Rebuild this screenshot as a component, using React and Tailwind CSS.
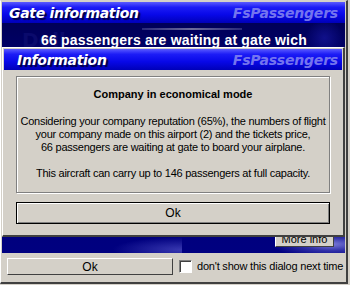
import React from 'react';

const TitleBar = ({ title, className = '' }) => (
  <div
    className={`flex items-center justify-between h-[21px] px-[7px] bg-[linear-gradient(180deg,#5a5aff_0%,#1c1cf6_25%,#0808e8_60%,#0000b8_100%)] ${className}`}
  >
    <span className="font-['DejaVu_Sans',sans-serif] font-bold italic text-[14px] leading-none tracking-[-0.3px] text-white [text-shadow:2px_2px_1px_#000040]">
      {title}
    </span>
    <span className="font-['DejaVu_Sans',sans-serif] font-bold italic text-[14px] leading-none tracking-[-0.2px] text-[#8080f0] opacity-90">
      FsPassengers
    </span>
  </div>
);

const App = () => {
  return (
    <div className="relative w-[350px] h-[285px] overflow-hidden bg-[#d4d0c8] font-['Liberation_Sans',Arial,sans-serif]">
      {/* Outer window: Gate information */}
      <div className="flex flex-col w-[348px] h-[284px] border-l border-t border-l-white border-t-[#d4d0c8] border-r-2 border-b-2 border-r-[#404040] border-b-[#404040] pl-[1px] pt-[1px] pr-[1px]">
        <TitleBar title="Gate information" />

        {/* Picture area */}
        <div className="relative h-[230px] bg-[linear-gradient(180deg,#000058_0%,#00006a_15%,#000080_100%)] overflow-hidden">
          <div className="absolute left-[20px] top-[2px] font-['DejaVu_Sans',sans-serif] font-bold text-[20px] text-[#0a0a6c]">
            Dell
          </div>
          <div className="absolute left-[140px] top-[5px] w-[100px] h-[2px] bg-[linear-gradient(90deg,#3a3a8a,#9a9ab8,#3a3a8a)] opacity-70" />
          <div className="absolute left-[300px] top-[0px] w-[45px] h-[30px] bg-[radial-gradient(circle,#10108a,transparent_70%)]" />
          <div className="absolute right-0 bottom-0 w-[70px] h-[22px] bg-[radial-gradient(ellipse_at_80%_60%,#7a7ad8_0%,#3030a8_35%,transparent_75%)]" />
          <div className="absolute left-[110px] bottom-[0px] w-[70px] h-[16px] bg-[radial-gradient(ellipse_at_100%_80%,#3838b0_0%,transparent_70%)]" />

          {/* Message, clipped by the dialog lying over it */}
          <div className="absolute left-0 top-0 w-full h-[24px] overflow-hidden">
            <p className="pl-[39px] pt-[10px] font-['Liberation_Sans',Arial,sans-serif] font-bold text-[14px] leading-none tracking-[0.2px] text-white whitespace-nowrap">
              66 passengers are waiting at gate wich
            </p>
          </div>

          {/* More info button (partly hidden under the dialog) */}
          <div className="absolute left-[273px] top-[214px] w-[59px] h-[10px] overflow-hidden">
            <button className="block -mt-[11px] w-[59px] h-[21px] bg-[#d4d0c8] border border-t-white border-l-white border-r-[#404040] border-b-[#404040] text-[11px] text-black leading-none pt-[5px]">
              More info
            </button>
          </div>

          {/* Inner dialog: Information */}
          <div className="absolute left-[0px] top-[24px] w-[343px] h-[190px] flex flex-col bg-[#d4d0c8] border-l border-t border-l-white border-t-white border-r-2 border-b-2 border-r-[#404040] border-b-[#404040] px-[1px] pt-[1px]">
            <TitleBar title="Information" className="pl-[13px] pr-[4px]" />
            <div className="flex flex-col px-[12px] pt-[6px]">
              <div className="h-[117px] border border-[#808080] shadow-[inset_1px_1px_0_#ffffff,1px_1px_0_#ffffff] flex flex-col items-center text-center text-black">
                <h3 className="mt-[11px] font-bold text-[11px] leading-[13px]">
                  Company in economical mode
                </h3>
                <p className="mt-[14px] text-[11px] leading-[13px] tracking-[-0.25px]">
                  Considering your company reputation (65%), the numbers of flight
                  <br />
                  your company made on this airport (2) and the tickets price,
                  <br />
                  66 passengers are waiting at gate to board your airplane.
                </p>
                <p className="mt-[13px] text-[11px] leading-[13px] tracking-[-0.25px]">
                  This aircraft can carry up to 146 passengers at full capacity.
                </p>
              </div>
              <button className="mt-[9px] h-[22px] w-full bg-[#d4d0c8] border border-black shadow-[inset_1px_1px_0_#ffffff,inset_-1px_-1px_0_#808080] text-[12px] text-black leading-none">
                Ok
              </button>
            </div>
          </div>
        </div>

        {/* Bottom bar */}
        <div className="flex items-center gap-[6px] pl-[5px] pt-[5px]">
          <button className="w-[166px] h-[17px] bg-[#d4d0c8] border border-t-white border-l-white border-r-[#404040] border-b-[#404040] text-[12px] text-black leading-none">
            Ok
          </button>
          <div className="flex items-center gap-[5px]">
            <span className="w-[13px] h-[13px] bg-white border border-t-[#808080] border-l-[#808080] border-r-white border-b-white shadow-[inset_1px_1px_0_#404040]" />
            <span className="text-[11px] text-black leading-none tracking-[-0.2px]">
              don't show this dialog next time
            </span>
          </div>
        </div>
      </div>
    </div>
  );
};

export default App;
